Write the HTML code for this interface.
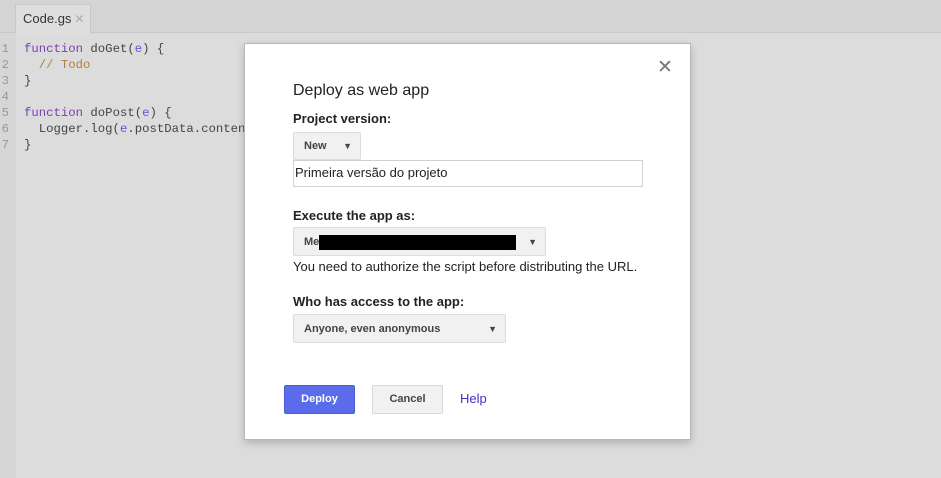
<!DOCTYPE html>
<html><head><meta charset="utf-8"><style>
*{margin:0;padding:0;box-sizing:border-box}
body{width:941px;height:478px;overflow:hidden;background:#dcdcdc;font-family:"Liberation Sans",Arial,sans-serif;position:relative}
.top{position:absolute;left:0;top:0;width:941px;height:33px;background:#d4d4d4;border-bottom:1px solid #c8c8c8}
.tab{position:absolute;left:15px;top:4px;width:76px;height:30px;background:#dedede;border:1px solid #c8c8c8;border-bottom:none;font-size:13px;color:#333;padding:6px 0 0 7px}
.tab span{color:#aaa;font-size:12px;margin-left:3px}
.gutter{position:absolute;left:0;top:33px;width:16px;height:445px;background:#d6d6d6}
.code{position:absolute;top:41px;font-family:"Liberation Mono",monospace;font-size:12.3px;line-height:16px;color:#444;white-space:pre}
.ln{left:0;color:#999;width:9px;text-align:right}
.src{left:24px}
.k{color:#7a3fb0}.c{color:#b0803a}.v{color:#5a5ad0}
.dlg{position:absolute;left:244px;top:43px;width:447px;height:397px;background:#fff;border:1px solid #b8b8b8;box-shadow:0 3px 8px rgba(0,0,0,.2)}
.x{position:absolute;left:412px;top:12px;font-size:19px;color:#777}
.a{position:absolute;left:48px;color:#222}
h1{font-weight:normal;font-size:16px}
.lab{font-weight:bold;font-size:13px}
.sel{position:absolute;left:48px;background:#f1f1f1;border:1px solid #dcdcdc;border-radius:2px;font-size:11px;font-weight:bold;color:#444;padding-left:10px}
.sel i{position:absolute;right:8px;font-style:normal;font-size:9px;color:#444}
.btn{position:absolute;height:29px;border-radius:2px;font-size:11px;font-weight:bold;text-align:center;line-height:27px}
</style></head><body>
<div class="top"><div class="tab">Code.gs<span>✕</span></div></div>
<div class="gutter"></div>
<div class="code ln">1
2
3
4
5
6
7</div>
<div class="code src"><span class="k">function</span> doGet(<span class="v">e</span>) {
  <span class="c">// Todo</span>
}

<span class="k">function</span> doPost(<span class="v">e</span>) {
  Logger.log(<span class="v">e</span>.postData.contents
}</div>
<div class="dlg">
<div class="x">✕</div>
<h1 class="a" style="top:38px">Deploy as web app</h1>
<div class="a lab" style="top:67px">Project version:</div>
<div class="sel" style="top:88px;width:68px;height:28px;line-height:27px">New<i>▼</i></div>
<div style="position:absolute;left:48px;top:116px;width:350px;height:27px;border:1px solid #d0d0d0;font-size:13px;padding:4px 0 0 1px;color:#222">Primeira versão do projeto</div>
<div class="a lab" style="top:164px">Execute the app as:</div>
<div class="sel" style="top:183px;width:253px;height:29px;line-height:28px">Me<span style="position:absolute;left:25px;top:7px;width:197px;height:15px;background:#000"></span><i>▼</i></div>
<div class="a" style="top:215px;font-size:13px">You need to authorize the script before distributing the URL.</div>
<div class="a lab" style="top:250px">Who has access to the app:</div>
<div class="sel" style="top:270px;width:213px;height:29px;line-height:28px">Anyone, even anonymous<i>▼</i></div>
<div class="btn" style="left:39px;top:341px;width:71px;background:#5a6ceb;color:#fff;border:1px solid #4a5cd8">Deploy</div>
<div class="btn" style="left:127px;top:341px;width:71px;background:#f1f1f1;color:#444;border:1px solid #d8d8d8">Cancel</div>
<div style="position:absolute;left:215px;top:347px;font-size:13px;color:#4433cc">Help</div>
</div>
</body></html>
